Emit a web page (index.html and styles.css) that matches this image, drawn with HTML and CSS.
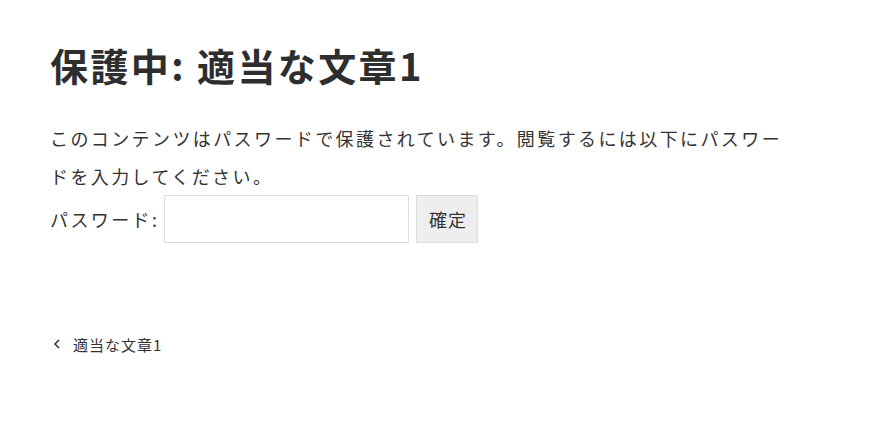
FILE: index.html
```html
<!DOCTYPE html>
<html lang="ja">
<head>
<meta charset="utf-8">
<title>保護中: 適当な文章1</title>
<link rel="stylesheet" href="styles.css">
</head>
<body>
<main class="entry">
  <h1 class="entry-title">保護中: 適当な文章1</h1>
  <div class="entry-content">
    <p class="notice">このコンテンツはパスワードで保護されています。閲覧するには以下にパスワードを入力してください。</p>
    <form class="pw-form">
      <label class="pw-label"><span>パスワード:</span><input class="pw-input" type="password"></label>
      <button class="pw-submit" type="button">確定</button>
    </form>
  </div>
  <nav class="post-nav">
    <a class="prev-link" href="#">
      <svg class="chev" width="8" height="12" viewBox="0 0 8 12"><path d="M6 2 L2 6 L6 10" fill="none" stroke="#333" stroke-width="1.6"/></svg>
      <span>適当な文章1</span>
    </a>
  </nav>
</main>
</body>
</html>
```

FILE: styles.css
```css
* { box-sizing: border-box; }
html, body { margin: 0; padding: 0; background: #fff; }
body {
  font-family: "Noto Sans CJK JP", "Noto Sans", sans-serif;
  color: #333;
}
.entry {
  padding: 41px 50px 0 50px;
  width: 850px;
}
.entry-title {
  margin: 0;
  font-size: 38px;
  letter-spacing: 2.4px;
  line-height: 48px;
  font-weight: 700;
  color: #2e2e2e;
}
.entry-content {
  margin-top: 30px;
}
.notice {
  margin: 0;
  font-size: 18px;
  letter-spacing: 2.4px;
  line-height: 38px;
  color: #333;
}
.pw-form {
  display: flex;
  align-items: center;
  gap: 7px;
  margin-top: 0;
}
.pw-label {
  display: flex;
  align-items: center;
  gap: 5px;
  font-size: 18px;
  letter-spacing: 2.4px;
  color: #333;
}
.pw-input {
  width: 245px;
  height: 48px;
  border: 1px solid #ddd;
  background: #fff;
  margin: 0;
  padding: 0 8px;
}
.pw-submit {
  height: 48px;
  width: 62px;
  border: 1px solid #ddd;
  background: #eee;
  font-family: "Noto Sans CJK JP", sans-serif;
  font-size: 18px;
  letter-spacing: 1px;
  color: #333;
  padding: 0 0 0 1px;
  margin: 0;
}
.post-nav {
  margin-top: 88px;
}
.prev-link {
  display: inline-flex;
  align-items: center;
  gap: 12px;
  text-decoration: none;
  color: #333;
  font-size: 15px;
  letter-spacing: 1px;
  padding-left: 3px;
}
.chev { display: block; }
```
